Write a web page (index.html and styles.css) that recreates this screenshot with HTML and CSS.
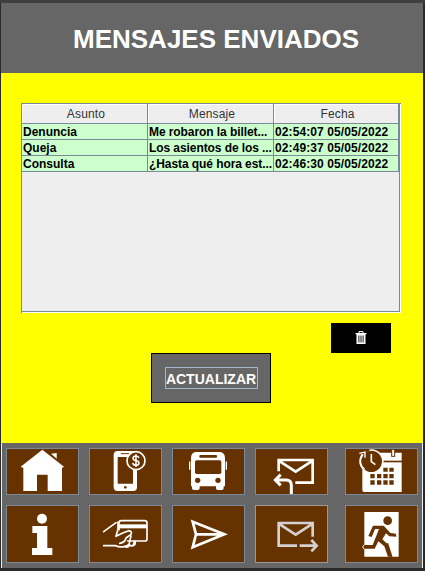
FILE: index.html
```html
<!DOCTYPE html>
<html lang="es">
<head>
<meta charset="utf-8">
<title>Mensajes enviados</title>
<link rel="stylesheet" href="styles.css">
</head>
<body>
<div class="window">
  <header class="header"><h1>MENSAJES ENVIADOS</h1></header>
  <main class="content">
    <div class="scroll-pane">
      <table class="messages">
        <colgroup><col class="col-subject"><col class="col-message"><col></colgroup>
        <thead><tr><th>Asunto</th><th>Mensaje</th><th>Fecha</th></tr></thead>
        <tbody>
          <tr><td>Denuncia</td><td>Me robaron la billet...</td><td>02:54:07 05/05/2022</td></tr>
          <tr><td>Queja</td><td>Los asientos de los ...</td><td>02:49:37 05/05/2022</td></tr>
          <tr><td>Consulta</td><td>¿Hasta qué hora est...</td><td>02:46:30 05/05/2022</td></tr>
        </tbody>
      </table>
    </div>
    <button class="delete" aria-label="Eliminar">
      <svg width="12" height="14" viewBox="0 0 12 14"><path d="M4 2V.6h4V2" fill="none" stroke="#fff"/><path d="M.5 2h11v1.2H.5zM1.5 3.2h9V13h-9z" fill="#fff"/><path d="M3.9 4.5v7M6 4.5v7M8.1 4.5v7" stroke="#000" stroke-width=".9"/></svg>
    </button>
    <button class="refresh"><span>ACTUALIZAR</span></button>
  </main>
  <nav class="nav">
    <button aria-label="Inicio"><svg viewBox="21 27 213 135"><path d="M127 29L192 80L186 84V153H143V104H111V153H70V84L62 80Z"/><path d="M153 41l17-2v17z"/></svg></button>
    <button aria-label="Recarga"><svg viewBox="270 27 213 135"><path fill-rule="evenodd" d="M353 33h48q10 0 10 10v99q0 11-11 11h-47q-12 0-12-11V45q0-12 12-12zM353 51V131H399V51z"/><path d="M363 41h24" stroke="#663300" stroke-width="3"/><circle cx="376" cy="142" r="4" class="cut"/><circle cx="408" cy="62" r="27" class="cut" stroke="#fff" stroke-width="5"/><path class="line" stroke-width="4.5" d="M417 54q-2-6-9-6-9 0-9 7 0 6 9 7t9 7q0 7-9 7-8 0-10-7M408 43v38"/></svg></button>
    <button aria-label="Buses"><svg viewBox="24 27 213 135"><path d="M91 36H166Q180 38 180 55V139H176V145Q176 150 170 150H158Q153 150 153 145V139H104V145Q104 150 98 150H87Q81 150 81 145V139H78V55Q78 38 91 36Z"/><rect x="72" y="64" width="4" height="26" rx="2"/><rect x="182" y="64" width="4" height="26" rx="2"/><rect class="cut" x="103" y="45" width="53" height="8" rx="3"/><rect class="cut" x="90" y="61" width="79" height="41" rx="5"/><circle class="cut" cx="98" cy="121" r="8"/><circle class="cut" cx="159" cy="121" r="8"/></svg></button>
    <button aria-label="Recibidos"><svg viewBox="273 27 213 135"><path class="line" stroke-width="8" d="M341 94V60H443V128H391M341 62L392 95L443 62"/><path class="line" stroke-width="9" d="M347 104L331 120L347 136M331 120H364Q379 120 379 136V164"/></svg></button>
    <button aria-label="Horarios"><svg viewBox="78 27 213 135"><path d="M127 38H245V156H132Q127 156 127 150Z"/><path class="cut" d="M190 62H246V67H190Z"/><rect x="215" y="28" width="9" height="21" fill="#fff" stroke="#663300" stroke-width="3"/><path class="cut" d="M190 83h13v12h-13zM208 83h13v12h-13zM151 102h13v13h-13zM171 102h13v13h-13zM190 102h13v13h-13zM208 102h13v13h-13zM151 121h13v13h-13zM171 121h13v13h-13zM190 121h13v13h-13zM208 121h13v13h-13z"/><circle cx="154" cy="64" r="36"/><circle class="cut" cx="154" cy="64" r="32"/><path d="M126 42A36 36 0 0 1 148 28" fill="none" stroke="#663300" stroke-width="8"/><path class="line" stroke-width="4" d="M134 88Q111 69 129 44M118 40L135 36L135 53"/><path class="line" stroke-width="5" d="M154 42V65L166 74"/></svg></button>
    <button aria-label="Información"><svg viewBox="21 198 213 168"><circle cx="126" cy="236" r="15"/><path d="M97 258H142V324H157V345H96V324H111V279H97Z"/></svg></button>
    <button aria-label="Pagos"><svg viewBox="270 198 213 168"><rect class="line" x="357" y="242" width="84" height="61" rx="7" stroke-width="5"/><path d="M357 253H441V265H357z"/><path class="cut" d="M354 270L374 277L382 305L361 320L345 310Z"/><path class="line" stroke-width="5" stroke-linecap="round" stroke-linejoin="round" d="M311 275L348 248M354 246V267L348 289L368 279L386 272Q399 275 392 284L378 294Q376 307 359 310M311 317H347Q358 323 376 319Q390 316 389 303L393 288M373 319Q383 325 389 315Q400 323 403 304M394 318Q407 318 406 304"/></svg></button>
    <button aria-label="Enviar"><svg viewBox="24 198 213 168"><path class="line" stroke-width="8" d="M83 245L178 283L83 322L93 283ZM93 283H178"/></svg></button>
    <button class="disabled" aria-label="Enviados" disabled><svg viewBox="273 198 213 168"><path class="line" stroke-width="8" d="M396 317H341V249H443V290M341 251L392 284L443 251"/><path class="line" stroke-width="8" d="M404 317H455M439 300L455 317L439 334"/></svg></button>
    <button aria-label="Salir"><svg viewBox="78 198 213 168"><path d="M133 216H236V350H133z"/><circle class="cut" cx="203" cy="242" r="13"/><path class="cut" d="M159 257H191L205 272L211 279L228 281L229 290L208 289L198 280L187 298L202 312L215 350H204L193 319L175 304L164 326H132V315H158L170 285L177 267H165L155 291L145 288Z"/><path d="M202 310L215 350" stroke="#663300" stroke-width="5"/><path class="line" stroke-width="3" d="M132 315L128 321L133 328"/></svg></button>
  </nav>
</div>
</body>
</html>
```
FILE: styles.css
```css
* { box-sizing: border-box; }

body {
  margin: 0;
  height: 571px;
  overflow: hidden;
  padding: 3px 2px 3px 1px;
  background: linear-gradient(#3c4043 0 3px, #292a2c 3px);
  font-family: "Liberation Sans", Arial, sans-serif;
}

.window { width: 422px; height: 565px; }

.header {
  height: 70px;
  background: #666;
  color: #fff;
}

h1 {
  margin: 0;
  padding-left: 72px;
  font-size: 26px;
  line-height: 72px;
  white-space: nowrap;
}

.content {
  height: 370px;
  padding: 30px 22px 0 20px;
  background: #ff0;
  display: flex;
  flex-direction: column;
}

.scroll-pane {
  width: 380px;
  height: 210px;
  border: 1px solid #7a8a99;
  border-right: 0;
  border-bottom: 0;
  box-shadow: inset -1px -1px #fff, inset -2px -2px #7a8a99;
  background: #eee;
}

.messages {
  width: 377px;
  table-layout: fixed;
  border-collapse: separate;
  border-spacing: 0;
  font-size: 12px;
}

.col-subject, .col-message { width: 126px; }

th, td {
  padding: 0 0 0 1px;
  border-right: 1px solid #7a8a99;
  border-bottom: 1px solid #7a8a99;
  white-space: nowrap;
  overflow: hidden;
}

th {
  height: 20px;
  padding: 2px 0 0 3px;
  background: #eee;
  box-shadow: inset 1px 1px #fff;
  color: #333;
  font-size: 12px;
  font-weight: 400;
  letter-spacing: 0.15px;
  line-height: 17px;
}

td {
  height: 16px;
  padding-top: 1px;
  background: #cfc;
  color: #000;
  font-weight: 700;
  line-height: 14px;
}

td:nth-child(2) { letter-spacing: -0.08px; }
td:last-child { letter-spacing: 0.1px; }

button {
  margin: 0;
  padding: 0;
  font-family: inherit;
  display: flex;
  align-items: center;
  justify-content: center;
}

.delete {
  align-self: flex-end;
  width: 60px;
  height: 30px;
  margin: 10px 10px 0 0;
  border: 0;
  background: #000;
}

.refresh {
  width: 120px;
  height: 50px;
  margin-left: 130px;
  border: 1px solid #000;
  background: #666;
  color: #fff;
  font-size: 14px;
  font-weight: 700;
}

.refresh span {
  width: 93px;
  height: 22px;
  border: 1px solid #a3b8cc;
  line-height: 22px;
}

.nav {
  height: 125px;
  padding: 5px 4px 0;
  border: solid #eee;
  border-width: 0 1px;
  background: #666;
  display: grid;
  grid-template-columns: 83px 83px 83px 90px 73px;
  grid-template-rows: 47px 58px;
  row-gap: 10px;
}

.nav button {
  width: 73px;
  border: 1px solid #7a8a99;
  background: #630;
}

.nav svg {
  display: block;
  width: 71px;
  height: 100%;
  fill: #fff;
}

.nav .cut { fill: #630; }
.nav .line { fill: none; stroke: #fff; }
.nav .disabled { border-color: #999; }
.nav .disabled .line { stroke: #d5d1cf; }
```
